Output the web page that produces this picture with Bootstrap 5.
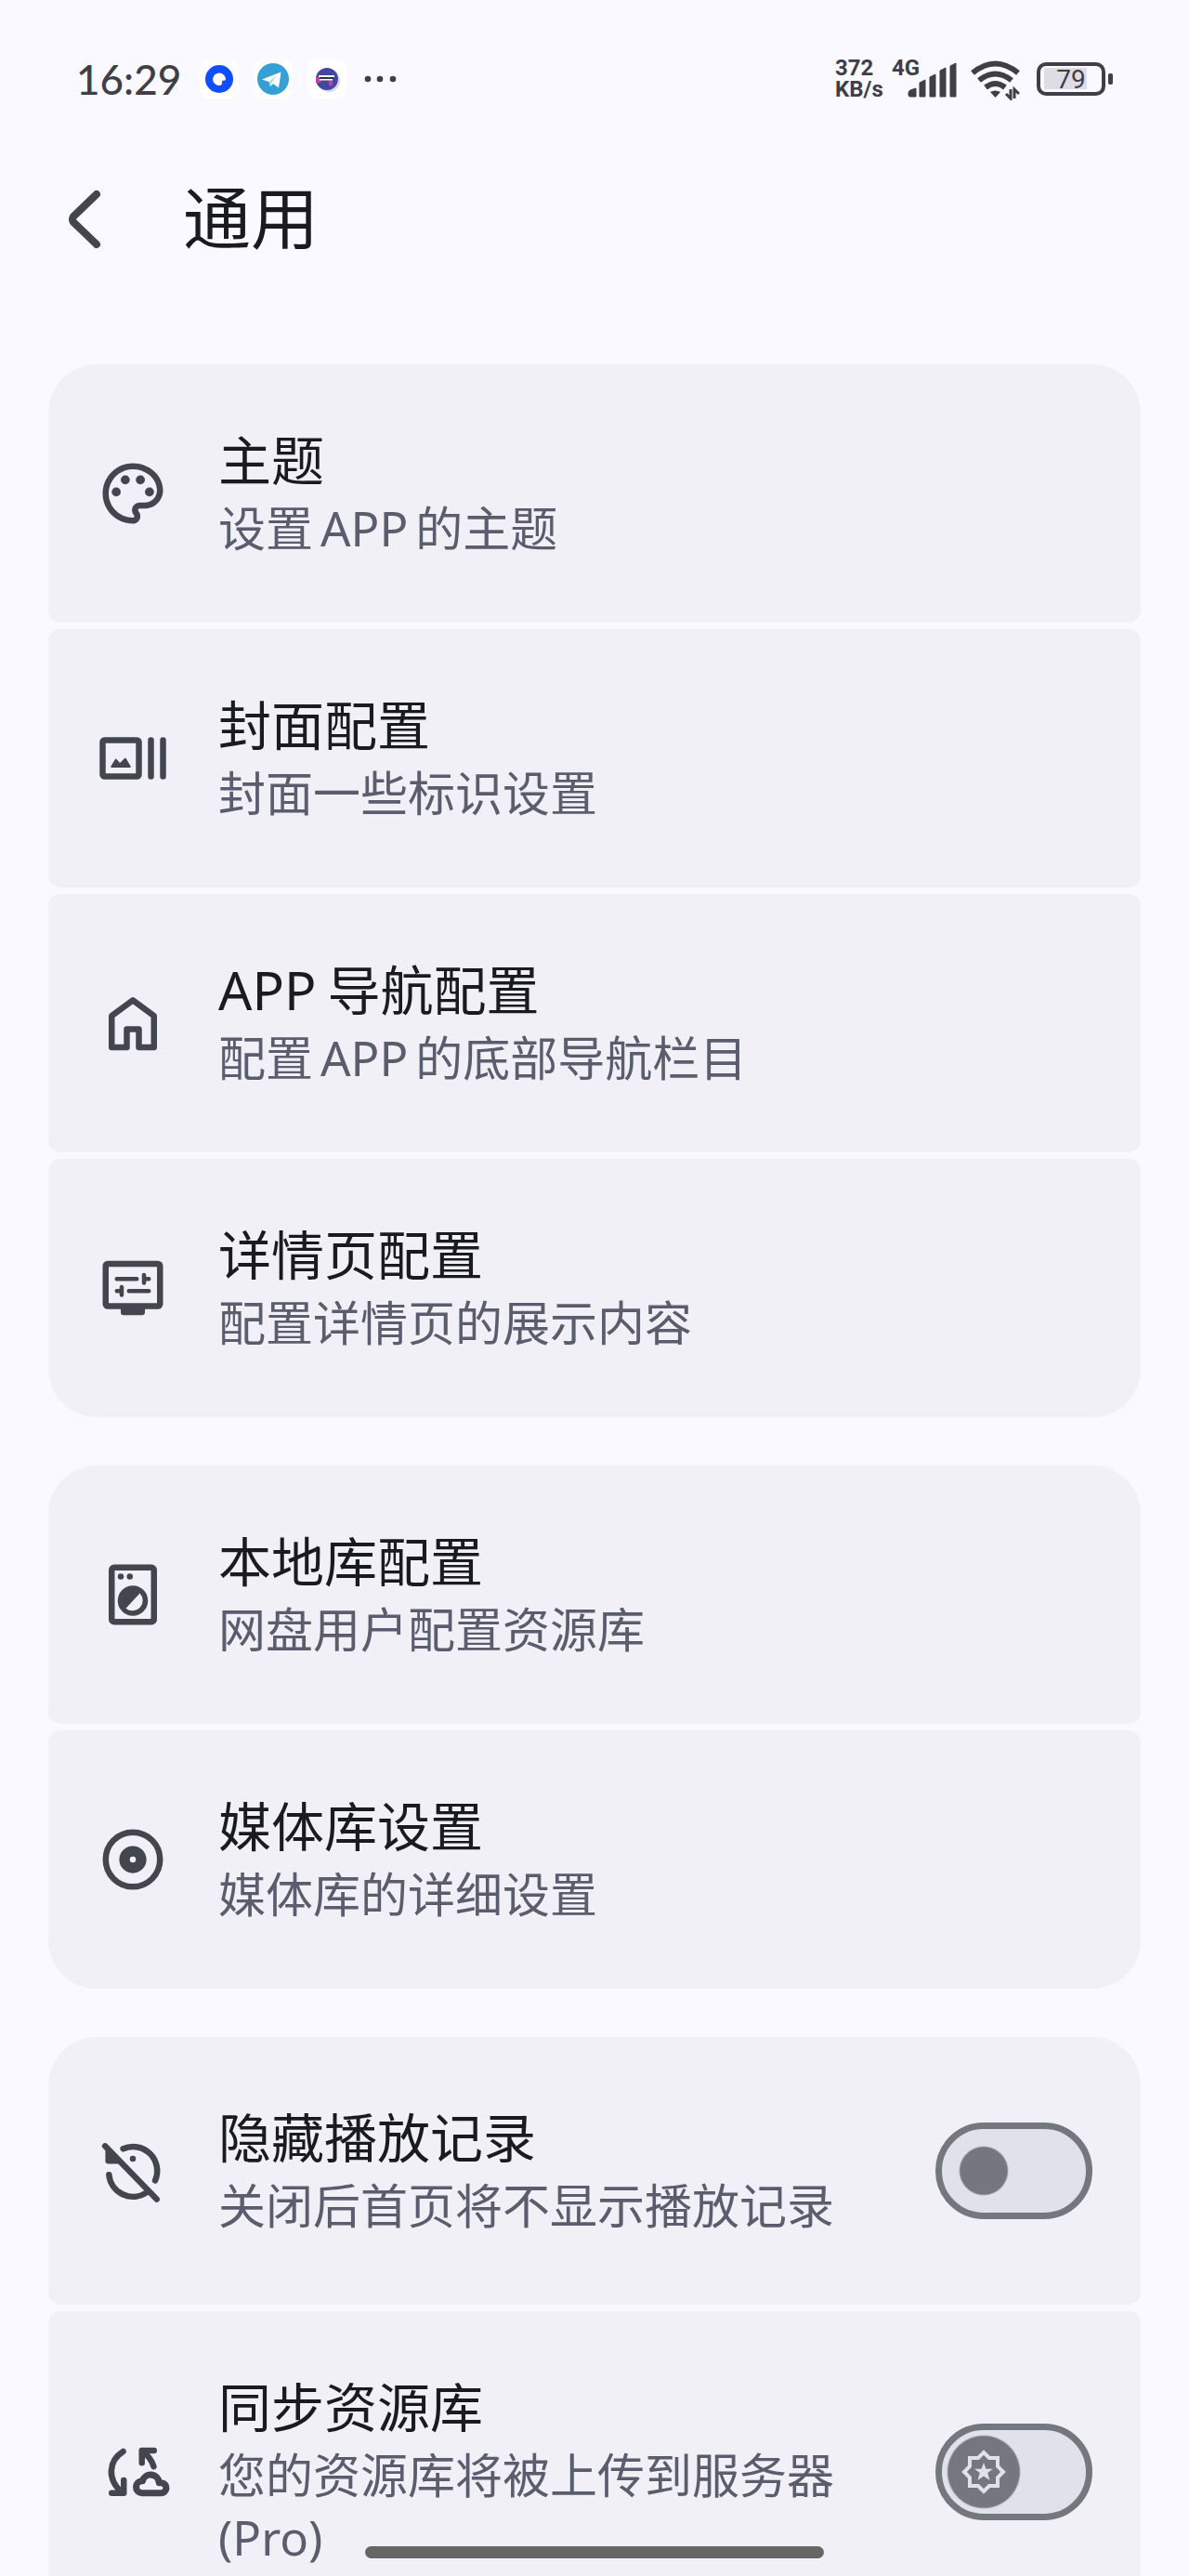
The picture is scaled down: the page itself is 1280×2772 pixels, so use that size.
<!DOCTYPE html>
<html lang="zh-CN">
<head>
<meta charset="utf-8">
<meta name="viewport" content="width=device-width, initial-scale=1">
<title>通用</title>
<link href="https://cdn.jsdelivr.net/npm/bootstrap@5.3.0/dist/css/bootstrap.min.css" rel="stylesheet">
<style>
  body { background: #f9f9ff; color: #1a1b20; font-family: "Noto Sans", "Noto Sans CJK SC", sans-serif; }
  svg { display: block; flex-shrink: 0; }

  /* system status bar */
  .sysbar { height: 170px; padding: 0 82px 0 82px; color: #3f3f45; font-family: Lato, "Noto Sans", sans-serif; }
  .sysbar-time { font-size: 44px; line-height: 46px; font-weight: 500; margin-right: 20px; }
  .sysbar-apps { gap: 16px; }
  .sysbar-speed { width: 61px; font-family: Roboto, sans-serif; font-size: 24px; line-height: 23px; font-weight: 700; }
  .sysbar-signal { width: 71px; height: 46px; margin-right: 14px; }
  .sysbar-net { font-family: Roboto, sans-serif; font-size: 24px; line-height: 23px; font-weight: 700; }
  .sysbar-wifi { margin-right: 18px; }
  .sysbar-level { left: 0; top: 0; width: 74px; font-family: Roboto, sans-serif; font-size: 28px; line-height: 37px; }

  /* title bar */
  .topbar { height: 132px; padding: 0 52px; gap: 73px; }
  .topbar-back { color: #44464f; line-height: 0; }
  .topbar-title { font-size: 73px; line-height: 96px; font-weight: 400; padding-bottom: 4px; }

  /* setting groups */
  .settings { padding: 90px 52px 0; gap: 52px; overflow: hidden auto; scrollbar-width: none; }
  .set-group { gap: 7px; border-radius: 0; flex-shrink: 0; }
  .set-row { gap: 53px; padding: 64px 52px; border: 0; border-radius: 13px; background: #f0f0f6; color: #44464f; }
  .set-row:first-child { border-top-left-radius: 52px; border-top-right-radius: 52px; }
  .set-row:last-child { border-bottom-left-radius: 52px; border-bottom-right-radius: 52px; }
  .set-row-switch { min-height: 288px; }
  .set-name { font-size: 57px; line-height: 79px; color: #1a1b20; }
  .set-note { font-size: 51px; line-height: 67px; padding-bottom: 4px; color: #5a5d6e; }
  .latin { margin: 0 8px; }
  .set-name .latin { margin-left: 0; margin-right: 12px; }

  .toggle.form-check-input {
    width: 169px; height: 104px; margin: 0; float: none; border: 7px solid #757780; border-radius: 52px;
    background: radial-gradient(circle at 45px 45px, #757780 25px, transparent 27px) #e1e2e9;
  }
  .toggle-pro.form-check-input { background: radial-gradient(circle at 45px 45px, #757780 38px, transparent 40px) #e1e2e9; }
  .toggle-mark { left: 26px; top: 26px; pointer-events: none; }

  .gesture { width: 494px; max-width: 40vw; height: 13px; bottom: 19px; border-radius: 7px; background: #666665; }
</style>
</head>
<body>
<div class="vh-100 d-flex flex-column overflow-hidden">

  <header>
    <div class="sysbar d-flex align-items-center">
      <span class="sysbar-time">16:29</span>
      <div class="sysbar-apps d-flex align-items-center">
        <svg width="42" height="42" viewBox="0 0 42 42" aria-hidden="true">
          <rect width="42" height="42" rx="9" fill="#fff"/><circle cx="21" cy="21" r="15" fill="#0f4fff"/>
          <path d="M14 21a7 7 0 1 1 14 1c-1 1-4 0-4 2s0 4-3 4a7 7 0 0 1-7-7z" fill="#fff"/>
        </svg>
        <svg width="42" height="42" viewBox="0 0 42 42" aria-hidden="true">
          <rect width="42" height="42" rx="9" fill="#fff"/><circle cx="21" cy="21" r="17" fill="#35a0d6"/>
          <path d="M9 21.500 29.500 13.500 27 30.500 21 26 18 29 16.500 24z" fill="#fff"/>
          <path d="M16.500 24 25 17 19 25 18 29z" fill="#a9d3ea"/>
        </svg>
        <svg width="42" height="42" viewBox="0 0 42 42" aria-hidden="true">
          <rect width="42" height="42" rx="9" fill="#fff"/><circle cx="23" cy="23" r="12" fill="#d9d8f0"/>
          <circle cx="21" cy="21" r="12" fill="#43479f"/><path d="M9 19h5v6h-5zM23 23h4v5h-4z" fill="#c0449c"/>
          <path d="M12 18h17M13 21.500h14" stroke="#fff" stroke-width="2"/><path d="M13 20h15" stroke="#15163c" stroke-width="1.500"/>
        </svg>
        <svg width="42" height="42" viewBox="0 0 42 42" fill="currentColor" aria-hidden="true">
          <circle cx="7" cy="21" r="3.300"/><circle cx="20" cy="21" r="3.300"/><circle cx="34" cy="21" r="3.300"/>
        </svg>
      </div>

      <div class="ms-auto d-flex align-items-center">
        <div class="sysbar-speed">372<br>KB/s</div>
        <div class="sysbar-signal position-relative">
          <span class="sysbar-net position-absolute top-0 start-0">4G</span>
          <svg width="71" height="46" viewBox="0 0 71 46" fill="currentColor" aria-hidden="true">
            <path d="M18 38q0-2 2-3l6-2v9h-6q-2 0-2-2zM30 27l6-3v18h-6zM41 21l6-3v24h-6zM52 14l6-3v31h-6zM63 9l6-3v36h-6z" stroke="currentColor" stroke-width="1" stroke-linejoin="round"/>
          </svg>
        </div>
        <svg class="sysbar-wifi" width="53" height="46" viewBox="0 0 53 46" fill="none" stroke="currentColor" stroke-width="6" aria-hidden="true">
          <path d="M2 16.500q24.500-20 49 0M9 24.500q17.500-14 35 0M16 32q10.500-8 21 0"/>
          <path d="M21 37q5.500-3 11 0l-5.500 6z" fill="currentColor" stroke="none"/>
          <path d="M43 34v10l-5-5M47 44V34l5 5" stroke-width="3"/>
        </svg>
        <div class="position-relative">
          <svg width="82" height="36" viewBox="0 0 82 36" aria-hidden="true">
            <rect x="8" y="6" width="46" height="23" fill="#dedce4"/>
            <rect x="2" y="2" width="70" height="32" rx="8" fill="none" stroke="currentColor" stroke-width="4"/>
            <rect x="77" y="12" width="5" height="12" rx="2" fill="currentColor"/>
          </svg>
          <span class="sysbar-level position-absolute text-center">79</span>
        </div>
      </div>
    </div>

    <div class="topbar d-flex align-items-center">
      <button type="button" class="topbar-back btn p-0 border-0" aria-label="返回">
        <svg width="72" height="78" viewBox="0 0 72 78" fill="none" stroke="currentColor" stroke-width="8" stroke-linecap="round" stroke-linejoin="round" aria-hidden="true"><path d="M52 12 27 36q-2 3 0 6l25 24"/></svg>
      </button>
      <h1 class="topbar-title mb-0">通用</h1>
    </div>
  </header>

  <main class="settings d-flex flex-column flex-grow-1">
    <div class="set-group list-group">
      <a href="#theme" class="set-row list-group-item d-flex align-items-center">
        <svg width="78" height="78" viewBox="0 0 24 24" fill="currentColor" aria-hidden="true">
          <path d="M12 2C6.490 2 2 6.490 2 12s4.490 10 10 10c1.380 0 2.500-1.120 2.500-2.500 0-.61-.23-1.200-.64-1.670-.08-.1-.13-.21-.13-.33 0-.28.22-.5.5-.5H16c3.310 0 6-2.690 6-6 0-4.960-4.490-9-10-9zm4 13h-1.770c-1.380 0-2.500 1.120-2.500 2.500 0 .61.22 1.190.63 1.650.06.07.14.19.14.35 0 .28-.22.5-.5.5-4.410 0-8-3.590-8-8s3.590-8 8-8 8 3.140 8 7c0 2.210-1.790 4-4 4z"/>
          <circle cx="6.500" cy="11.500" r="1.500"/><circle cx="9.500" cy="7.500" r="1.500"/><circle cx="14.500" cy="7.500" r="1.500"/><circle cx="17.500" cy="11.500" r="1.500"/>
        </svg>
        <div><div class="set-name">主题</div><div class="set-note">设置<span class="latin">APP</span>的主题</div></div>
      </a>
      <a href="#cover" class="set-row list-group-item d-flex align-items-center">
        <svg width="78" height="78" viewBox="0 0 24 24" fill="none" stroke="currentColor" stroke-width="2" stroke-linecap="round" aria-hidden="true">
          <rect x="2" y="6" width="12" height="12" rx=".6"/><path d="M18 6v12M22 6v12"/>
          <path d="M5 14.800 6.400 12.500 7.700 14 9.500 12.200 11 14.800z" fill="currentColor" stroke-width=".6" stroke-linejoin="round"/>
        </svg>
        <div><div class="set-name">封面配置</div><div class="set-note">封面一些标识设置</div></div>
      </a>
      <a href="#nav" class="set-row list-group-item d-flex align-items-center">
        <svg width="78" height="78" viewBox="0 0 24 24" fill="none" stroke="currentColor" stroke-width="2" stroke-linejoin="round" aria-hidden="true">
          <path d="M5 9.600V20h5v-6h4v6h5V9.600L12 4.400z"/>
        </svg>
        <div><div class="set-name"><span class="latin">APP</span>导航配置</div><div class="set-note">配置<span class="latin">APP</span>的底部导航栏目</div></div>
      </a>
      <a href="#detail" class="set-row list-group-item d-flex align-items-center">
        <svg width="78" height="78" viewBox="0 0 24 24" fill="none" stroke="currentColor" stroke-width="1.400" stroke-linecap="round" aria-hidden="true">
          <rect x="3" y="4" width="18" height="14" rx=".7" stroke-width="2"/>
          <path d="M8 18.500h8V20q0 1-1 1H9q-1 0-1-1z" fill="currentColor" stroke="none"/>
          <path d="M6.700 9h6.600M15.700 7.700v2.600M15.700 9h1.600M6.700 13h1.600M8.300 11.700v2.600M10.700 13h6.600"/>
        </svg>
        <div><div class="set-name">详情页配置</div><div class="set-note">配置详情页的展示内容</div></div>
      </a>
    </div>

    <div class="set-group list-group">
      <a href="#local" class="set-row list-group-item d-flex align-items-center">
        <svg width="78" height="78" viewBox="0 0 24 24" fill="currentColor" aria-hidden="true">
          <rect x="5" y="3" width="14" height="18" rx=".8" fill="none" stroke="currentColor" stroke-width="2"/>
          <circle cx="8" cy="6" r="1"/><circle cx="11" cy="6" r="1"/>
          <path fill-rule="evenodd" d="M12 9a5 5 0 1 0 0 10 5 5 0 0 0 0-10zm2.300 2.500a3.400 3.400 0 0 1-4.600 5z"/>
        </svg>
        <div><div class="set-name">本地库配置</div><div class="set-note">网盘用户配置资源库</div></div>
      </a>
      <a href="#media" class="set-row list-group-item d-flex align-items-center">
        <svg width="78" height="78" viewBox="0 0 24 24" fill="none" stroke="currentColor" aria-hidden="true">
          <circle cx="12" cy="12" r="9" stroke-width="2"/><circle cx="12" cy="12" r="2.750" stroke-width="3.500"/>
        </svg>
        <div><div class="set-name">媒体库设置</div><div class="set-note">媒体库的详细设置</div></div>
      </a>
    </div>

    <div class="set-group list-group">
      <div class="set-row set-row-switch list-group-item d-flex align-items-center">
        <svg width="78" height="78" viewBox="0 0 24 24" fill="none" stroke="currentColor" stroke-width="2" stroke-linecap="round" aria-hidden="true">
          <path d="M2.800 3.800 19.900 21.400M8.800 4.700A8 8 0 0 1 19.400 15.200M4.100 13.300A8 8 0 0 0 16.800 19"/>
          <path d="M2.900 4.500v4.200q0 1 1 1h4.400z" fill="currentColor" stroke="none"/>
          <circle cx="12" cy="8" r="1" fill="currentColor" stroke="none"/>
        </svg>
        <label for="hideHistory" class="flex-grow-1"><span class="set-name d-block">隐藏播放记录</span><span class="set-note d-block">关闭后首页将不显示播放记录</span></label>
        <input class="toggle form-check-input flex-shrink-0" type="checkbox" role="switch" id="hideHistory">
      </div>
      <div class="set-row set-row-switch list-group-item d-flex align-items-center">
        <svg width="78" height="78" viewBox="0 0 24 24" fill="none" stroke="currentColor" stroke-width="2" stroke-linecap="round" stroke-linejoin="round" overflow="visible" aria-hidden="true">
          <path d="M8.800 5.200C4 8.200 3.300 14.400 8.400 18.800M9 14.800V19H5M19 4.900h-4V9M15.200 5.200Q18 7.200 18.900 10.200"/>
          <path d="M15 19h6.200a1.700 1.700 0 0 0 .3-3.400h-.8a2.800 2.800 0 0 0-5.500-.6A2 2 0 0 0 15 19z" stroke-width="2.200"/>
        </svg>
        <label for="syncLibrary" class="flex-grow-1"><span class="set-name d-block">同步资源库</span><span class="set-note d-block">您的资源库将被上传到服务器(Pro)</span></label>
        <div class="position-relative flex-shrink-0">
          <input class="toggle toggle-pro form-check-input d-block" type="checkbox" role="switch" id="syncLibrary">
          <svg class="toggle-mark position-absolute" width="52" height="52" viewBox="0 0 52 52" aria-hidden="true">
            <path d="M26 5l6 6h9v9l6 6-6 6v9h-9l-6 6-6-6h-9v-9l-6-6 6-6v-9h9z" fill="none" stroke="#e1e2e9" stroke-width="4"/>
            <path d="M26 16l2.400 6.700H36l-5.800 4.200 2.300 8.100L26 30.600 19.500 35l2.300-8.100L16 22.700h7.600z" fill="#e1e2e9"/>
          </svg>
        </div>
      </div>
    </div>
  </main>
</div>
<div class="gesture position-fixed start-50 translate-middle-x"></div>
<script src="https://cdn.jsdelivr.net/npm/bootstrap@5.3.0/dist/js/bootstrap.bundle.min.js"></script>
</body>
</html>
